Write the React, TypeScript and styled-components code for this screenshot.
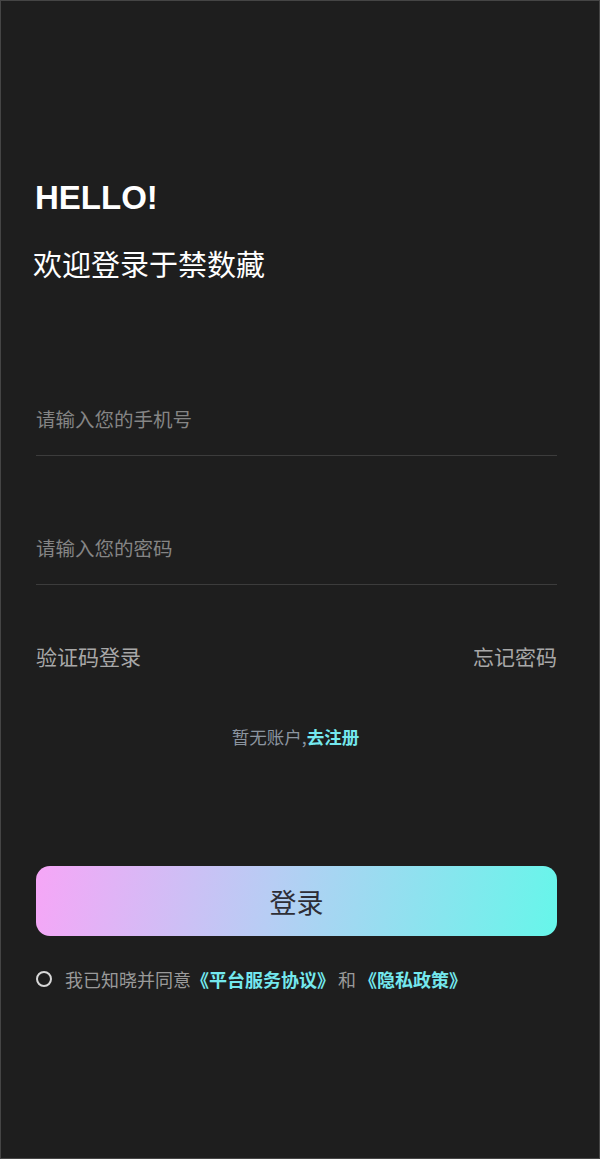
import styled, { createGlobalStyle } from 'styled-components';

const GlobalStyle = createGlobalStyle`
  * {
    box-sizing: border-box;
  }
  body {
    margin: 0;
    background: #1e1e1e;
    font-family: "Noto Sans", "Noto Sans CJK SC", sans-serif;
  }
`;

const Page = styled.div`
  width: 600px;
  height: 1159px;
  background: #1e1e1e;
  border: 1px solid #454545;
  padding: 177px 42px 0 35px;
  display: flex;
  flex-direction: column;
`;

const Title = styled.h1`
  margin: 0 0 0 -1px;
  font-family: "Liberation Sans", "Noto Sans CJK SC", sans-serif;
  font-size: 33px;
  line-height: 40px;
  font-weight: 700;
  color: #ffffff;
`;

const Subtitle = styled.h2`
  margin: 27px 0 0 -3px;
  font-size: 29px;
  line-height: 40px;
  font-weight: 400;
  color: #ffffff;
`;

const Field = styled.label<{ $gap: number }>`
  display: block;
  margin-top: ${(p) => p.$gap}px;
  padding-bottom: 17px;
  border-bottom: 1px solid #3c3c3c;
`;

const Input = styled.input`
  display: block;
  width: 100%;
  height: 40px;
  padding: 0;
  border: none;
  outline: none;
  background: transparent;
  font-family: "Noto Sans CJK SC", sans-serif;
  font-size: 19.5px;
  color: #e0e0e0;

  &::placeholder {
    color: #858585;
  }
`;

const LinkRow = styled.div`
  display: flex;
  justify-content: space-between;
  align-items: center;
  margin-top: 57px;
  height: 28px;
`;

const PlainLink = styled.a`
  font-family: "Noto Sans CJK SC", sans-serif;
  font-size: 21px;
  line-height: 28px;
  color: #a8a8a8;
  text-decoration: none;
`;

const Register = styled.p`
  margin: 55px 0 0;
  text-align: center;
  font-family: "Noto Sans CJK SC", sans-serif;
  font-size: 17.5px;
  line-height: 24px;
  color: #8c95a0;
  padding-right: 2px;
`;

const Accent = styled.a`
  color: #74e8ee;
  font-weight: 700;
  text-decoration: none;
`;

const Joiner = styled.span`
  margin: 0 3px;
`;

const LoginButton = styled.button`
  margin-top: 117px;
  width: 100%;
  height: 70px;
  border: none;
  border-radius: 14px;
  background: linear-gradient(100deg, #f6a6f7 0%, #b7cdf4 45%, #66f6ea 100%);
  font-family: "Noto Sans CJK SC", sans-serif;
  font-size: 27px;
  color: #2e2e36;
  cursor: pointer;
`;

const Agreement = styled.div`
  display: flex;
  align-items: center;
  margin-top: 31px;
  gap: 13px;
`;

const Radio = styled.span`
  width: 16px;
  height: 16px;
  border-radius: 50%;
  border: 2px solid #d8d8d8;
  flex-shrink: 0;
`;

const AgreementText = styled.span`
  font-family: "Noto Sans CJK SC", sans-serif;
  font-size: 18px;
  line-height: 24px;
  color: #9a9a9a;
`;

export default function App() {
  return (
    <>
      <GlobalStyle />
      <Page>
        <Title>HELLO!</Title>
        <Subtitle>欢迎登录于禁数藏</Subtitle>

        <Field $gap={113}>
          <Input type="tel" placeholder="请输入您的手机号" />
        </Field>
        <Field $gap={71}>
          <Input type="password" placeholder="请输入您的密码" />
        </Field>

        <LinkRow>
          <PlainLink href="#">验证码登录</PlainLink>
          <PlainLink href="#">忘记密码</PlainLink>
        </LinkRow>

        <Register>
          暂无账户,<Accent href="#">去注册</Accent>
        </Register>

        <LoginButton>登录</LoginButton>

        <Agreement>
          <Radio />
          <AgreementText>
            我已知晓并同意<Accent href="#">《平台服务协议》</Accent>
            <Joiner>和</Joiner>
            <Accent href="#">《隐私政策》</Accent>
          </AgreementText>
        </Agreement>
      </Page>
    </>
  );
}
